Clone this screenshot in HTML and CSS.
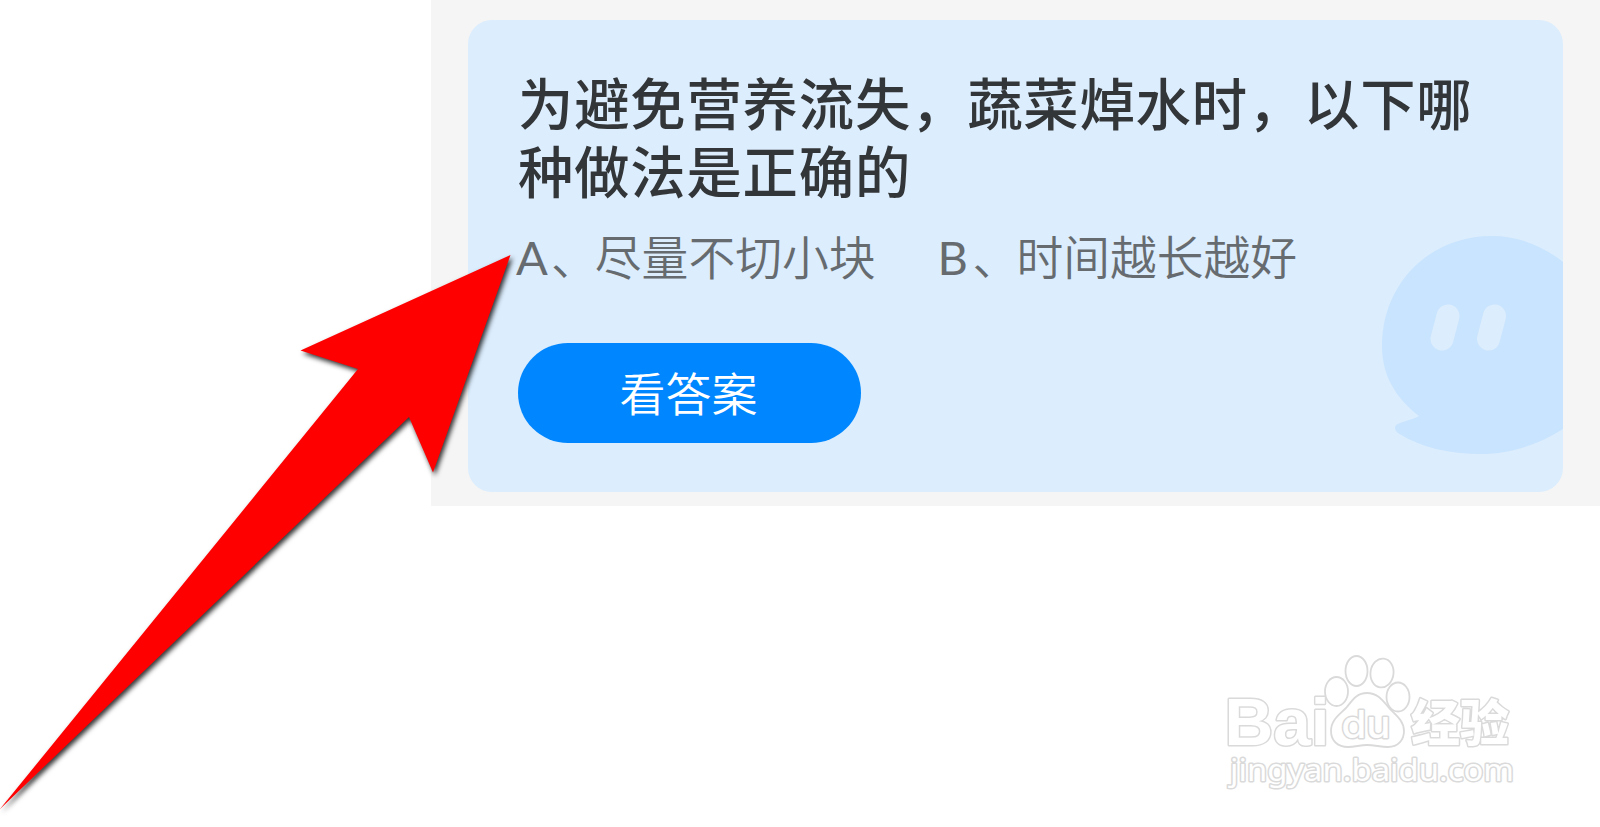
FILE: index.html
```html
<!DOCTYPE html>
<html lang="zh-CN">
<head>
<meta charset="utf-8">
<title>看答案</title>
<link rel="stylesheet" href="styles.css">
</head>
<body>
<main class="page">
  <section class="panel">
    <article class="card">
      <svg class="mascot" viewBox="0 0 182 222" aria-hidden="true">
        <path class="mascot-body" d="M182 28 C162 12 138 2 111 2 C48 2 1 50 1 112 C1 141 14 163 38 182 C32 186 21 187 15 191 C13 194 14 196 17 199 C40 214 70 220 100 220 C132 220 160 209 182 195 Z"/>
        <path class="mascot-eye" d="M67 82 L61 105 M113.500 82 L107.500 105"/>
      </svg>
      <h1 class="question">为避免营养流失，蔬菜焯水时，以下哪种做法是正确的</h1>
      <div class="options">
        <span class="option"><span class="letter">A</span><span class="pause">、</span>尽量不切小块</span>
        <span class="option"><span class="letter">B</span><span class="pause">、</span>时间越长越好</span>
      </div>
      <button class="answer" type="button">看答案</button>
    </article>
  </section>
  <svg class="arrow" viewBox="0 0 540 827" aria-hidden="true">
    <path d="M510.500 255 L300.500 350.500 L358 369 L0 809 L409 417 L433 472.500 Z"/>
  </svg>
  <svg class="watermark" viewBox="0 0 320 160" aria-label="Baidu 经验">
    <g class="mark">
      <text class="mark-latin" x="14.500" y="105" textLength="105" lengthAdjust="spacingAndGlyphs">Bai</text>
      <ellipse cx="126.500" cy="51.500" rx="11.500" ry="14.500"/>
      <ellipse cx="146.500" cy="31" rx="11" ry="15" />
      <ellipse cx="172" cy="33" rx="11.500" ry="14.500" transform="rotate(8 172 33)"/>
      <ellipse cx="188" cy="57" rx="11.500" ry="14.500"/>
      <path d="M157 53 C146 53 142 61 136 68 C129 75 121 80 121 91 C121 101 128 107 138 107 C145 107 150 105 157 105 C165 105 170 107 178 107 C188 107 194 100 194 91 C194 81 186 75 180 69 C173 61 168 53 157 53 Z"/>
      <text class="mark-du" x="131.500" y="97.500" textLength="49" lengthAdjust="spacingAndGlyphs">du</text>
      <text class="mark-cjk" x="201" y="100.500" textLength="98" lengthAdjust="spacingAndGlyphs">经验</text>
      <text class="mark-url" x="20" y="141" textLength="284" lengthAdjust="spacingAndGlyphs">jingyan.baidu.com</text>
    </g>
  </svg>
</main>
</body>
</html>
```
FILE: styles.css
```css
body {
  margin: 0;
  background: #fff;
  font-family: "Noto Sans CJK SC", sans-serif;
}

.page {
  position: relative;
  height: 827px;
  overflow: hidden;
}

.panel {
  box-sizing: border-box;
  height: 506px;
  margin-left: 431px;
  padding: 20px 37.500px 14px 37px;
  background: #f5f5f5;
}

.card {
  position: relative;
  box-sizing: border-box;
  height: 472px;
  padding: 47px 50px 0;
  overflow: hidden;
  border-radius: 24px;
  background: #dcedfd;
}

.mascot {
  position: absolute;
  right: 0;
  bottom: 36px;
  width: 182px;
  height: 222px;
}

.mascot-body {
  fill: #c9e4fe;
}

.mascot-eye {
  fill: none;
  stroke: #dcedfd;
  stroke-width: 23;
  stroke-linecap: round;
}

.question {
  position: relative;
  margin: 0;
  color: #333638;
  font-size: 55.300px;
  font-weight: 500;
  letter-spacing: 0.850px;
  line-height: 68px;
}

.options {
  position: relative;
  display: flex;
  gap: 64px;
  height: 68px;
  margin-top: 18px;
  color: #666b6f;
  font-size: 46.800px;
  font-weight: 350;
  line-height: 68px;
  white-space: nowrap;
}

.letter {
  display: inline-block;
  width: 32px;
  margin-left: -2px;
  font-family: Lato, sans-serif;
  font-size: 47px;
  font-weight: 400;
  line-height: 1;
}

.pause {
  margin: 0 -3px 0 3px;
}

.answer {
  display: block;
  width: 343px;
  height: 100px;
  margin-top: 54px;
  padding: 0 2px 4px 0;
  border: 0;
  border-radius: 50px;
  background: #0087ff;
  color: #fff;
  font-family: inherit;
  font-size: 46px;
  font-weight: 350;
  line-height: 68px;
}

.arrow {
  position: absolute;
  top: 0;
  left: 0;
  width: 540px;
  height: 827px;
  fill: #f00;
  filter: drop-shadow(2px 3px 2.500px rgba(0, 0, 0, 0.8));
}

.watermark {
  position: absolute;
  top: 640px;
  left: 1210px;
  width: 320px;
  height: 160px;
}

.mark {
  fill: #fff;
  stroke: #dadada;
  stroke-width: 1.800;
  stroke-linejoin: round;
}

.mark text {
  paint-order: stroke;
  stroke-width: 3;
}

.mark-latin {
  font: bold 67px "Liberation Sans", sans-serif;
}

.mark-du {
  font: 500 38px Inter, sans-serif;
}

.mark-cjk {
  font: 900 49px "Noto Sans CJK SC", sans-serif;
}

.mark-url {
  font: 31px "Noto Sans", sans-serif;
}
```
